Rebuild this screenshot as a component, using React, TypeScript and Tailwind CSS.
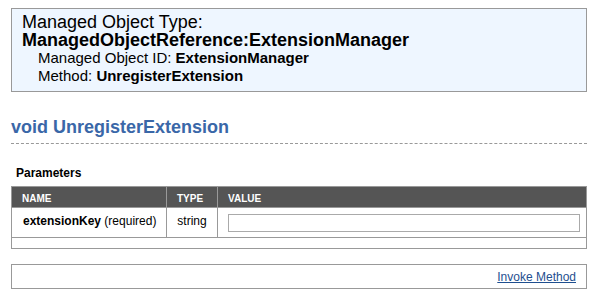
import React from "react";

export default function App() {
  return (
    <div
      className="w-[593px] h-[301px] bg-white text-black"
      style={{ fontFamily: '"Liberation Sans", Arial, sans-serif' }}
    >
      <div className="pl-[11px] pt-[8px] w-[587px]">
        <div className="border border-[#999999] bg-[#eef6ff] pl-[10px] pt-[4px] pb-[4px] h-[84px]">
          <div className="text-[18px] leading-[18px]">Managed Object Type:</div>
          <div className="text-[18px] leading-[18px] font-bold">
            ManagedObjectReference:ExtensionManager
          </div>
          <div className="pl-[16px] text-[15px] leading-[18px]">
            Managed Object ID: <b>ExtensionManager</b>
          </div>
          <div className="pl-[16px] text-[15px] leading-[18px]">
            Method: <b>UnregisterExtension</b>
          </div>
        </div>

        <h1 className="mt-[24px] text-[18px] leading-[22px] font-bold text-[#3a67a8]">
          void UnregisterExtension
        </h1>
        <div className="mt-[5px] border-t border-dashed border-[#999999]"></div>

        <div className="mt-[22px] pl-[5px] text-[12px] leading-[14px] font-bold">
          Parameters
        </div>

        <table className="mt-[6px] w-[576px] table-fixed border-collapse border border-[#999999] text-[12px]">
          <colgroup>
            <col className="w-[155px]" />
            <col className="w-[51px]" />
            <col />
          </colgroup>
          <thead>
            <tr className="h-[21px] bg-[#555555] text-white text-[10px] font-bold">
              <th className="border border-[#999999] text-left pl-[10px] pt-[2px]">NAME</th>
              <th className="border border-[#999999] text-left pl-[10px] pt-[2px]">TYPE</th>
              <th className="border border-[#999999] text-left pl-[10px] pt-[2px]">VALUE</th>
            </tr>
          </thead>
          <tbody>
            <tr className="h-[30px]">
              <td className="border border-[#999999] pl-[11px] align-top pt-[4px]">
                <b>extensionKey</b> (required)
              </td>
              <td className="border border-[#999999] text-center align-top pt-[4px]">string</td>
              <td className="border border-[#999999] pl-[10px] align-middle">
                <input
                  type="text"
                  className="block w-[352px] h-[18px] border border-[#aaaaaa] bg-white outline-none"
                />
              </td>
            </tr>
            <tr className="h-[11px]">
              <td colSpan={3} className="border border-[#999999]"></td>
            </tr>
          </tbody>
        </table>

        <div className="mt-[15px] h-[25px] border border-[#999999] flex items-center justify-end pr-[10px]">
          <a href="#" className="text-[12px] text-[#1f4f8f] underline leading-[14px] mt-[1px]">
            Invoke Method
          </a>
        </div>
      </div>
    </div>
  );
}
